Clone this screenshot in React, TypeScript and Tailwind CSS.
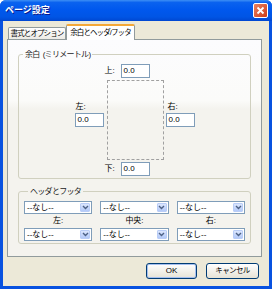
import React from 'react'

const Field: React.FC = () => (
  <div className="w-[29px] h-[14px] border border-[#7f9db9] bg-white pl-[2px] text-[8px] leading-[12px] text-black">
    0.0
  </div>
)

const Select: React.FC = () => (
  <div className="h-[13px] border border-[#7f9db9] bg-white flex items-center justify-between">
    <span className="pl-[2px] text-[8px] leading-[11px]">--なし--</span>
    <span className="w-[10px] h-[9px] mr-[1px] rounded-[1px] border border-[#b9cdf7] bg-gradient-to-b from-[#dbe6fd] to-[#b3c9f8] flex items-center justify-center">
      <svg width="7" height="5" viewBox="0 0 7 5">
        <path d="M1 1 L3.5 3.5 L6 1" fill="none" stroke="#4d6185" strokeWidth="1.4" />
      </svg>
    </span>
  </div>
)

const GroupBox: React.FC<{ label: string; className?: string; children: React.ReactNode }> = ({
  label,
  className,
  children,
}) => (
  <fieldset className={`border border-[#d0d0bf] rounded-[3px] ${className ?? ''}`}>
    <legend className="ml-[4px] px-[2px] text-[8px] leading-[9px] tracking-[-0.7px] text-[#222] whitespace-pre">
      {label}
    </legend>
    {children}
  </fieldset>
)

const App: React.FC = () => {
  return (
    <div className="w-[272px] h-[289px] flex flex-col bg-[#0852e0] rounded-t-[6px] overflow-hidden font-['Liberation_Sans','Noto_Sans_CJK_JP',sans-serif] text-black">
      {/* title bar */}
      <div className="h-[21px] flex items-center justify-between pl-[5px] pr-[4px] bg-[linear-gradient(to_bottom,#3d8ff5_0%,#0a62ef_12%,#0058ee_45%,#0055e5_80%,#0047d1_100%)]">
        <span className="text-white font-bold text-[9px] leading-none [text-shadow:1px_1px_0_#0a1a8a]">ページ設定</span>
        <div className="w-[15px] h-[15px] rounded-[2px] border border-white bg-gradient-to-br from-[#e9805f] to-[#cc3a12] flex items-center justify-center">
          <svg width="9" height="9" viewBox="0 0 9 9">
            <path d="M1.5 1.5 L7.5 7.5 M7.5 1.5 L1.5 7.5" stroke="white" strokeWidth="1.8" />
          </svg>
        </div>
      </div>

      {/* dialog body */}
      <div className="flex-1 mx-[3px] mb-[3px] bg-[#ece9d8] flex flex-col">
        <div className="h-[18px] flex items-end pl-[5px]">
          <div className="w-[58px] h-[12px] border border-b-0 border-[#919b9c] rounded-t-[2px] bg-gradient-to-b from-white to-[#ecebe5] text-[7.5px] leading-[11px] text-center whitespace-nowrap tracking-[-0.9px]">
            書式とオプション
          </div>
          <div className="relative z-10 -mb-px w-[69px] h-[16px] border-x border-[#919b9c] border-t-2 border-t-[#f4a838] rounded-t-[2px] bg-white text-[7.5px] leading-[13px] text-center whitespace-nowrap tracking-[-0.9px]">
            余白とヘッダ/フッタ
          </div>
        </div>

        <div className="ml-[4px] w-[255px] h-[218px] border border-[#919b9c] bg-[linear-gradient(to_bottom,#fcfcfe_0%,#fbfbf9_28%,#f4f3ee_32%,#f4f3ee_100%)] px-[10px] pt-[10px]">
          <GroupBox label="余白  (ミリメートル)" className="h-[129px] pt-[5px]">
            <div className="flex justify-center items-center">
              <div className="flex flex-col items-start mb-[12px]">
                <span className="text-[8px] leading-[10px] pl-[1px] pb-[1px]">左:</span>
                <Field />
              </div>
              <div className="ml-[3px] w-[57px] flex flex-col">
                <div className="flex items-center ml-[-2px]">
                  <span className="w-[16px] text-[8px] leading-[10px]">上:</span>
                  <Field />
                </div>
                <div className="mt-[2px] h-[80px] border border-dashed border-[#a0a0a0]" />
                <div className="mt-[2px] flex items-center ml-[-2px]">
                  <span className="w-[16px] text-[8px] leading-[10px]">下:</span>
                  <Field />
                </div>
              </div>
              <div className="ml-[2px] flex flex-col items-start mb-[12px]">
                <span className="text-[8px] leading-[10px] pl-[2px] pb-[1px]">右:</span>
                <Field />
              </div>
            </div>
          </GroupBox>

          <GroupBox label="ヘッダとフッタ" className="mt-[8px] pt-[5px] pb-[2px] px-[5px]">
            <div className="grid grid-cols-3 gap-x-[8px]">
              <Select />
              <Select />
              <Select />
              <span className="h-[14px] text-[8px] leading-[14px] text-center">左:</span>
              <span className="h-[14px] text-[8px] leading-[14px] text-center">中央:</span>
              <span className="h-[14px] text-[8px] leading-[14px] text-center">右:</span>
              <Select />
              <Select />
              <Select />
            </div>
          </GroupBox>
        </div>

        <div className="mt-[6px] flex justify-end gap-[9px] pr-[10px]">
          <button className="w-[51px] h-[16px] rounded-[3px] border border-[#003c74] bg-gradient-to-b from-white to-[#e6e3d6] text-[8px] leading-none shadow-[inset_0_0_0_1px_#a6c0ef]">
            OK
          </button>
          <button className="w-[53px] h-[16px] rounded-[3px] border border-[#003c74] bg-gradient-to-b from-white to-[#e6e3d6] text-[7.5px] leading-none tracking-[-0.6px]">
            キャンセル
          </button>
        </div>
      </div>
    </div>
  )
}

export default App
